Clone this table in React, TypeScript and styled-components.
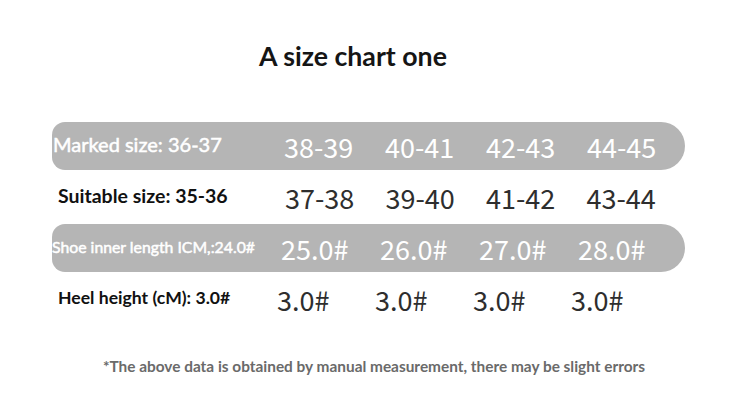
import React from "react"
import styled, { createGlobalStyle } from "styled-components"

type RowData = {
  label: string
  values: string[]
  shaded: boolean
  labelSize: number
  labelWeight: number
  indent: number
  valuesAt: number
  step: number
}

const rows: RowData[] = [
  {
    label: "Marked size: 36-37",
    values: ["38-39", "40-41", "42-43", "44-45"],
    shaded: true,
    labelSize: 20,
    labelWeight: 400,
    indent: 1,
    valuesAt: 284,
    step: 101,
  },
  {
    label: "Suitable size: 35-36",
    values: ["37-38", "39-40", "41-42", "43-44"],
    shaded: false,
    labelSize: 19.5,
    labelWeight: 700,
    indent: 6,
    valuesAt: 285,
    step: 100.5,
  },
  {
    label: "Shoe inner length ICM,:24.0#",
    values: ["25.0#", "26.0#", "27.0#", "28.0#"],
    shaded: true,
    labelSize: 15.8,
    labelWeight: 400,
    indent: 0,
    valuesAt: 281,
    step: 99,
  },
  {
    label: "Heel height (cM): 3.0#",
    values: ["3.0#", "3.0#", "3.0#", "3.0#"],
    shaded: false,
    labelSize: 17.6,
    labelWeight: 700,
    indent: 6,
    valuesAt: 277,
    step: 98,
  },
]

const CHART_LEFT = 52

const App = () => {
  return (
    <Page>
      <GlobalStyle />
      <Title>A size chart one</Title>
      <Chart>
        {rows.map((row) => (
          <Row key={row.label} $shaded={row.shaded}>
            <Label
              $size={row.labelSize}
              $weight={row.labelWeight}
              $indent={row.indent}
              $width={row.valuesAt - CHART_LEFT}
              $shaded={row.shaded}
            >
              {row.label}
            </Label>
            {row.values.map((v, i) => (
              <Value key={i} $step={row.step} $shaded={row.shaded}>
                {v}
              </Value>
            ))}
          </Row>
        ))}
      </Chart>
      <Note>
        *The above data is obtained by manual measurement, there may be slight
        errors
      </Note>
    </Page>
  )
}

export default App

const GlobalStyle = createGlobalStyle`
  html, body {
    margin: 0;
    padding: 0;
    background: #ffffff;
  }
`

const Page = styled.div`
  width: 748px;
  height: 406px;
  overflow: hidden;
  display: flex;
  flex-direction: column;
  align-items: center;
  background: #ffffff;
`

const Title = styled.h1`
  margin: 38px 42px 0 0;
  font-family: Lato, "Liberation Sans", sans-serif;
  font-weight: 700;
  font-size: 26.7px;
  line-height: 36px;
  color: #151515;
`

const Chart = styled.div`
  align-self: flex-start;
  margin: 48px 0 0 ${CHART_LEFT}px;
  width: 633px;
  display: flex;
  flex-direction: column;
  gap: 3px;
`

const Row = styled.div<{ $shaded: boolean }>`
  height: 48px;
  display: flex;
  align-items: center;
  background: ${(p) => (p.$shaded ? "#b5b5b5" : "transparent")};
  border-radius: 13px 24px 24px 13px;
`

const Label = styled.div<{
  $size: number
  $weight: number
  $indent: number
  $width: number
  $shaded: boolean
}>`
  flex: none;
  box-sizing: border-box;
  width: ${(p) => p.$width}px;
  padding-left: ${(p) => p.$indent}px;
  font-family: Lato, "Liberation Sans", sans-serif;
  font-size: ${(p) => p.$size}px;
  font-weight: ${(p) => p.$weight};
  color: ${(p) => (p.$shaded ? "#ffffff" : "#111111")};
  -webkit-text-stroke: ${(p) => (p.$shaded ? "0.5px #ffffff" : "0")};
  white-space: nowrap;
  margin-top: -4px;
`

const Value = styled.div<{ $step: number; $shaded: boolean }>`
  flex: none;
  width: ${(p) => p.$step}px;
  font-family: "Noto Sans CJK SC", "Noto Sans", sans-serif;
  font-size: 27px;
  font-weight: 400;
  color: ${(p) => (p.$shaded ? "#ffffff" : "#2e2e2e")};
  white-space: nowrap;
`

const Note = styled.p`
  margin: 34px 0 0;
  font-family: Lato, "Liberation Sans", sans-serif;
  font-weight: 700;
  font-size: 15.4px;
  color: #6a6a6a;
`
